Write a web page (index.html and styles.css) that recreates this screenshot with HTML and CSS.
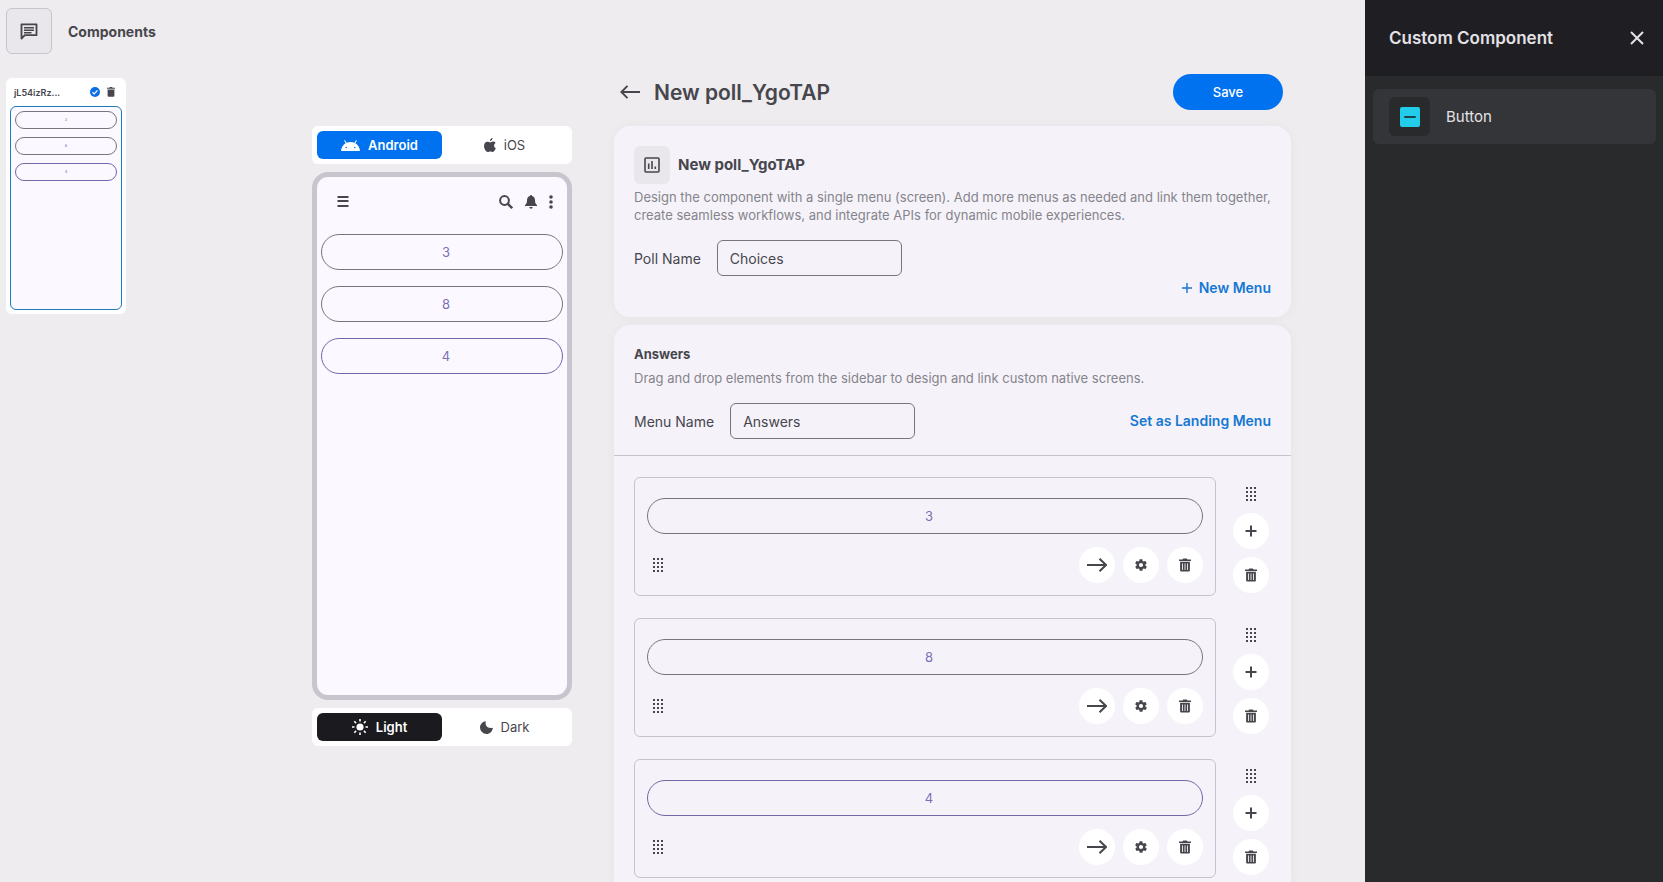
FILE: index.html
```html
<!DOCTYPE html>
<html lang="en">
<head>
    <meta charset="UTF-8">
    <meta name="viewport" content="width=device-width, initial-scale=1.0">
    <title>New poll_YgoTAP</title>
    <link rel="stylesheet" href="styles.css">
</head>
<body>
    <svg class="sprite" aria-hidden="true">
        <symbol id="i-trash" viewBox="0 0 14 16">
            <path d="M0 1.5h4l1-1.2h4l1 1.2h4v1.8H0zM1.3 4.3h11.4v10.2a1.2 1.2 0 0 1-1.2 1.2h-9a1.2 1.2 0 0 1-1.2-1.2z"/>
            <path d="M4.1 6.2v7.6M7 6.2v7.6M9.9 6.2v7.6" stroke="#fff" stroke-width="1"/>
        </symbol>
        <symbol id="i-grip" viewBox="0 0 10 14">
            <path d="M0 1h10M0 5h10M0 9h10M0 13h10" stroke="currentColor" stroke-width="2" stroke-dasharray="2 2"/>
        </symbol>
        <symbol id="i-plus" viewBox="0 0 12 12">
            <path d="M6 .5v11M.5 6h11" stroke="currentColor" stroke-width="2" fill="none"/>
        </symbol>
        <symbol id="i-gear" viewBox="0 0 24 24">
            <path d="M19.4 13c0-.3.1-.6.1-1s0-.7-.1-1l2.1-1.600c.2-.2.3-.4.100-.700l-2-3.400c-.1-.2-.4-.3-.6-.2l-2.500 1c-.5-.4-1.100-.7-1.700-1l-.4-2.600c0-.300-.2-.500-.5-.500h-4c-.2 0-.4.200-.5.500l-.4 2.600c-.6.300-1.200.6-1.700 1l-2.500-1c-.2-.1-.5 0-.6.200l-2 3.400c-.1.300-.1.500.1.700L4.600 11c0 .3-.1.600-.1 1s0 .7.1 1l-2.100 1.600c-.2.200-.2.400-.1.700l2 3.400c.1.200.4.300.6.200l2.500-1c.5.400 1.100.7 1.700 1l.4 2.600c0 .300.300.500.500.500h4c.3 0 .5-.2.5-.5l.4-2.600c.6-.3 1.200-.6 1.700-1l2.500 1c.2.100.5 0 .6-.2l2-3.400c.1-.3.100-.5-.1-.7zM12 15.600a3.600 3.600 0 1 1 0-7.200 3.600 3.600 0 0 1 0 7.200z"/>
        </symbol>
        <symbol id="i-arrow" viewBox="0 0 20 14">
            <path d="M0 7h19M12.500.7 19 7l-6.500 6.300" fill="none" stroke="currentColor" stroke-width="2"/>
        </symbol>
    </svg>

    <div class="layout">
        <div class="workspace">
            <header class="topbar">
                <button class="icon-tile" aria-label="Messages">
                    <svg width="20" height="20" viewBox="0 0 24 24"><path d="M3 4h18v13H7l-4 4V4z" fill="none" stroke="currentColor" stroke-width="2.200" stroke-linejoin="round"/><path d="M6 8h12M6 11h12M6 14h9" stroke="currentColor" stroke-width="1.800"/></svg>
                </button>
                <h2>Components</h2>
            </header>

            <div class="content">
                <div class="thumb">
                    <div class="thumb-head">
                        <span class="thumb-name">jL54izRz...</span>
                        <svg width="10" height="10" viewBox="0 0 10 10"><circle cx="5" cy="5" r="5" fill="#0b6fe4"/><path d="M2.500 5.200l1.700 1.700 3.300-3.500" fill="none" stroke="#fff" stroke-width="1.300"/></svg>
                        <button class="plain" aria-label="Delete component"><svg width="8" height="10" viewBox="0 0 8 10"><path d="M0 .8h2.300L3 .1h2l.7.700H8v1H0zM.6 2.400h6.800v6.400a1 1 0 0 1-1 1H1.600a1 1 0 0 1-1-1z"/></svg></button>
                    </div>
                    <div class="thumb-screen">
                        <div class="thumb-pill">3</div>
                        <div class="thumb-pill">8</div>
                        <div class="thumb-pill pill-alt">4</div>
                    </div>
                </div>

                <section class="preview">
                    <div class="switch">
                        <button class="switch-btn active-blue">
                            <svg width="19" height="11" viewBox="0 0 19 11"><path d="M0 11C.300 7 2.300 4.500 4.600 3.200L3.100.6l.8-.5 1.600 2.700c2.500-1 5.500-1 8 0L15.100.1l.8.5-1.500 2.600C16.700 4.500 18.700 7 19 11z" fill="currentColor"/><circle cx="5.200" cy="7.500" r=".8" fill="#0072ef"/><circle cx="13.800" cy="7.500" r=".8" fill="#0072ef"/></svg>
                            Android
                        </button>
                        <button class="switch-btn">
                            <svg width="12" height="14" viewBox="0 0 12 14"><path d="M8.600.1c.1 1.500-1.200 3-2.700 3C5.700 1.600 7.100.200 8.600.1zM11.800 10.200c-.7 1.800-1.800 3.700-3.100 3.700-.900 0-1.300-.5-2.400-.5s-1.500.5-2.400.5C2 14 0 10.700 0 7.900 0 5.200 1.700 3.700 3.400 3.700c1.100 0 2 .7 2.700.7.600 0 1.700-.8 3.100-.8.900 0 1.800.5 2.400 1.300-2.200 1.300-1.800 4.400.2 5.300z"/></svg>
                            iOS
                        </button>
                    </div>

                    <div class="phone">
                        <div class="phone-bar">
                            <svg class="menu-icon" width="12" height="12" viewBox="0 0 12 12"><path d="M.5 1h11M.5 5h11M.5 10h11" stroke="currentColor" stroke-width="2"/></svg>
                            <svg width="14" height="14" viewBox="0 0 14 14"><circle cx="5.500" cy="5.500" r="4.400" fill="none" stroke="currentColor" stroke-width="2"/><path d="M8.800 8.800l4.400 4.400" stroke="currentColor" stroke-width="2.400"/></svg>
                            <svg width="12" height="14" viewBox="0 0 12 14"><path d="M6 0c.6 0 1 .5 1 1.100C9 1.600 10 3.200 10 5.200c0 2.800.7 3.900 2 4.900v1H0v-1c1.300-1 2-2.100 2-4.900 0-2 1-3.600 3-4.100C5 .5 5.400 0 6 0zM4.300 12h3.400c0 2.300-3.400 2.300-3.400 0z"/></svg>
                            <svg width="4" height="14" viewBox="0 0 4 14"><circle cx="2" cy="2" r="1.800"/><circle cx="2" cy="7" r="1.800"/><circle cx="2" cy="12" r="1.800"/></svg>
                        </div>
                        <button class="pill">3</button>
                        <button class="pill">8</button>
                        <button class="pill pill-alt">4</button>
                    </div>

                    <div class="switch">
                        <button class="switch-btn active-dark">
                            <svg width="16" height="16" viewBox="0 0 16 16"><circle cx="8" cy="8" r="3.600" fill="currentColor"/><path d="M8 0v2.500M8 13.500V16M0 8h2.500M13.500 8H16M2.300 2.300l1.800 1.800M11.900 11.900l1.800 1.800M2.300 13.700l1.800-1.800M11.900 4.100l1.800-1.800" stroke="currentColor" stroke-width="1.600"/></svg>
                            Light
                        </button>
                        <button class="switch-btn">
                            <svg width="13" height="13" viewBox="0 0 13 13"><path d="M6 .2C4.400 3.800 7.400 8 12.900 6.700 12.500 10.500 9.800 13 6.500 13A6.500 6.500 0 0 1 0 6.500C0 3.200 2.500.4 6 .2z"/></svg>
                            Dark
                        </button>
                    </div>
                </section>

                <main class="editor">
                    <div class="editor-head">
                        <button class="plain" aria-label="Back"><svg width="20" height="14" viewBox="0 0 20 14"><path d="M20 7H1.500M7.500.9 1.400 7l6.100 6.100" fill="none" stroke="currentColor" stroke-width="2"/></svg></button>
                        <h1>New poll_YgoTAP</h1>
                        <button class="save-btn">Save</button>
                    </div>

                    <section class="card poll-card">
                        <div class="card-heading">
                            <span class="poll-icon"><svg width="16" height="16" viewBox="0 0 16 16"><rect x="1" y="1" width="14" height="14" rx="1" fill="none" stroke="currentColor" stroke-width="1.600"/><path d="M4.700 6.500V12M8 4v8M11.300 9.500V12" stroke="currentColor" stroke-width="1.600"/></svg></span>
                            <h3 class="poll-title">New poll_YgoTAP</h3>
                        </div>
                        <p class="hint">Design the component with a single menu (screen). Add more menus as needed and link them together, create seamless workflows, and integrate APIs for dynamic mobile experiences.</p>
                        <div class="field">
                            <label for="poll-name">Poll Name</label>
                            <input type="text" id="poll-name" value="Choices">
                        </div>
                        <button class="text-btn new-menu"><svg width="10" height="10" viewBox="0 0 10 10"><path d="M5 0v10M0 5h10" stroke="currentColor" stroke-width="1.400"/></svg>New Menu</button>
                    </section>

                    <section class="card">
                        <div class="menu-head">
                            <h3>Answers</h3>
                            <p class="hint">Drag and drop elements from the sidebar to design and link custom native screens.</p>
                            <div class="field">
                                <label for="menu-name">Menu Name</label>
                                <input type="text" id="menu-name" value="Answers">
                                <button class="text-btn">Set as Landing Menu</button>
                            </div>
                        </div>

                        <div class="elements">
                            <div class="element">
                                <div class="element-box">
                                    <button class="pill">3</button>
                                    <div class="element-tools">
                                        <svg class="grip" width="10" height="14"><use href="#i-grip"/></svg>
                                        <button class="round" aria-label="Link"><svg width="20" height="14"><use href="#i-arrow"/></svg></button>
                                        <button class="round" aria-label="Settings"><svg width="14" height="14"><use href="#i-gear"/></svg></button>
                                        <button class="round" aria-label="Delete"><svg width="12" height="14"><use href="#i-trash"/></svg></button>
                                    </div>
                                </div>
                                <div class="row-tools">
                                    <svg class="grip" width="10" height="14"><use href="#i-grip"/></svg>
                                    <button class="round" aria-label="Add"><svg width="12" height="12"><use href="#i-plus"/></svg></button>
                                    <button class="round" aria-label="Delete row"><svg width="12" height="14"><use href="#i-trash"/></svg></button>
                                </div>
                            </div>
                            <div class="element">
                                <div class="element-box">
                                    <button class="pill">8</button>
                                    <div class="element-tools">
                                        <svg class="grip" width="10" height="14"><use href="#i-grip"/></svg>
                                        <button class="round" aria-label="Link"><svg width="20" height="14"><use href="#i-arrow"/></svg></button>
                                        <button class="round" aria-label="Settings"><svg width="14" height="14"><use href="#i-gear"/></svg></button>
                                        <button class="round" aria-label="Delete"><svg width="12" height="14"><use href="#i-trash"/></svg></button>
                                    </div>
                                </div>
                                <div class="row-tools">
                                    <svg class="grip" width="10" height="14"><use href="#i-grip"/></svg>
                                    <button class="round" aria-label="Add"><svg width="12" height="12"><use href="#i-plus"/></svg></button>
                                    <button class="round" aria-label="Delete row"><svg width="12" height="14"><use href="#i-trash"/></svg></button>
                                </div>
                            </div>
                            <div class="element">
                                <div class="element-box">
                                    <button class="pill pill-alt">4</button>
                                    <div class="element-tools">
                                        <svg class="grip" width="10" height="14"><use href="#i-grip"/></svg>
                                        <button class="round" aria-label="Link"><svg width="20" height="14"><use href="#i-arrow"/></svg></button>
                                        <button class="round" aria-label="Settings"><svg width="14" height="14"><use href="#i-gear"/></svg></button>
                                        <button class="round" aria-label="Delete"><svg width="12" height="14"><use href="#i-trash"/></svg></button>
                                    </div>
                                </div>
                                <div class="row-tools">
                                    <svg class="grip" width="10" height="14"><use href="#i-grip"/></svg>
                                    <button class="round" aria-label="Add"><svg width="12" height="12"><use href="#i-plus"/></svg></button>
                                    <button class="round" aria-label="Delete row"><svg width="12" height="14"><use href="#i-trash"/></svg></button>
                                </div>
                            </div>
                        </div>
                    </section>
                </main>
            </div>
        </div>

        <aside class="sidebar">
            <div class="sidebar-head">
                <h2>Custom Component</h2>
                <button class="plain" aria-label="Close"><svg width="14" height="14" viewBox="0 0 14 14"><path d="M1 1l12 12M13 1L1 13" stroke="currentColor" stroke-width="2"/></svg></button>
            </div>
            <button class="component">
                <span class="component-icon"><svg width="20" height="20" viewBox="0 0 20 20"><rect width="20" height="20" rx="2" fill="#22cdea"/><path d="M5 10h10" stroke="#20434b" stroke-width="2" stroke-linecap="round"/></svg></span>
                Button
            </button>
        </aside>
    </div>
</body>
</html>
```
FILE: styles.css
```css
* {
    box-sizing: border-box;
}
body {
    margin: 0;
    font-family: Inter, sans-serif;
    font-size: 14px;
    color: #47464d;
    background-color: #eeecef;
}
h1, h2, h3, p {
    margin: 0;
}
button, input {
    font: inherit;
    color: inherit;
}
button {
    padding: 0;
    border: none;
    background: none;
    cursor: pointer;
}
svg {
    display: block;
    flex: none;
    fill: currentColor;
}
.sprite {
    position: absolute;
    width: 0;
    height: 0;
}
.layout {
    display: flex;
    height: 100vh;
    overflow: hidden;
}
.workspace {
    flex: 1;
    min-width: 0;
    overflow-y: auto;
    scrollbar-width: none;
    padding: 8px 74px 0 6px;
}

/* top bar */
.topbar {
    display: flex;
    align-items: center;
    gap: 16px;
}
.icon-tile {
    display: flex;
    align-items: center;
    justify-content: center;
    width: 46px;
    height: 46px;
    border: 1px solid #c6c5cd;
    border-radius: 6px;
    background-color: #e9e7eb;
}
.topbar h2 {
    font-size: 14px;
    font-weight: 700;
}
.content {
    display: flex;
    align-items: flex-start;
    padding-top: 20px;
}

/* thumbnail */
.thumb {
    width: 120px;
    margin-top: 4px;
    padding: 0 4px 4px;
    border-radius: 6px;
    background-color: #fff;
}
.thumb-head {
    display: flex;
    align-items: center;
    gap: 7px;
    height: 28px;
    padding: 0 7px 0 4px;
    font-size: 9px;
    font-weight: 600;
}
.thumb-name {
    flex: 1;
}
.thumb-screen {
    display: flex;
    flex-direction: column;
    gap: 8px;
    height: 204px;
    padding: 4px;
    border: 1px solid #1a7db5;
    border-radius: 6px;
    background-color: #fbf9ff;
}
.thumb-pill {
    height: 18px;
    border: 1px solid #77767d;
    border-radius: 9px;
    color: #7c6fb8;
    font-size: 4px;
    line-height: 16px;
    text-align: center;
}

/* device preview */
.preview {
    display: flex;
    flex-direction: column;
    gap: 8px;
    width: 260px;
    margin: 52px 42px 0 186px;
}
.switch {
    display: flex;
    padding: 5px;
    border-radius: 6px;
    background-color: #fff;
}
.switch-btn {
    display: flex;
    flex: 1;
    align-items: center;
    justify-content: center;
    gap: 8px;
    height: 28px;
    border-radius: 6px;
    font-size: 13px;
}
.active-blue {
    background-color: #0072ef;
    color: #fff;
    font-weight: 600;
}
.active-dark {
    background-color: #1b1b1f;
    color: #fff;
    font-weight: 600;
}
.phone {
    display: flex;
    flex-direction: column;
    gap: 16px;
    height: 528px;
    padding: 0 4px;
    border: 5px solid #c7c5ce;
    border-radius: 16px;
    background-color: #fbf9ff;
}
.phone-bar {
    display: flex;
    align-items: center;
    gap: 12px;
    height: 41px;
    padding: 8px 10px 0 16px;
}
.menu-icon {
    margin-right: auto;
}
.pill {
    width: 100%;
    height: 36px;
    padding-left: 8px;
    border: 1px solid #77767d;
    border-radius: 18px;
    color: #7c6fb8;
    font-size: 13px;
    text-align: center;
}
.pill-alt {
    border-color: #7268a6;
}

/* editor */
.editor {
    flex: 1;
    min-width: 0;
}
.editor-head {
    display: flex;
    align-items: center;
    gap: 14px;
    height: 36px;
    margin-bottom: 16px;
    padding: 0 8px 0 6px;
}
.editor-head h1 {
    flex: 1;
    font-size: 21px;
    font-weight: 600;
}
.save-btn {
    width: 110px;
    height: 36px;
    border-radius: 18px;
    background-color: #0072ef;
    color: #fff;
    font-size: 13px;
    font-weight: 500;
}
.card {
    margin-bottom: 8px;
    border-radius: 16px;
    background-color: #f5f3f9;
    box-shadow: 0 0 12px rgba(40, 40, 60, 0.04);
}
.card h3 {
    font-size: 13px;
    font-weight: 700;
    line-height: 18px;
}
.poll-card {
    display: flex;
    flex-direction: column;
    padding: 20px 20px 19px;
}
.card-heading {
    display: flex;
    align-items: center;
    gap: 8px;
    margin-bottom: 4px;
}
.poll-icon {
    display: flex;
    align-items: center;
    justify-content: center;
    width: 36px;
    height: 38px;
    border-radius: 6px;
    background-color: #e9e7ec;
}
.card .poll-title {
    font-size: 15px;
}
.hint {
    margin-right: -8px;
    color: #85848c;
    font-size: 13px;
    line-height: 18px;
}
.field {
    display: flex;
    align-items: center;
    gap: 16px;
    margin-top: 16px;
}
.field input {
    width: 185px;
    height: 36px;
    padding: 0 12px;
    border: 1px solid #77767d;
    border-radius: 6px;
    background: none;
}
.text-btn {
    display: flex;
    align-items: center;
    gap: 7px;
    margin-left: auto;
    color: #1678d3;
    font-weight: 600;
    line-height: 20px;
}
.new-menu {
    margin-top: 2px;
}
.menu-head {
    padding: 20px 20px 16px;
    border-bottom: 1px solid #c6c5cd;
}
.menu-head .hint {
    margin-top: 6px;
}
.elements {
    display: flex;
    flex-direction: column;
    gap: 22px;
    padding: 21px 22px 21px 20px;
}
.element {
    display: flex;
    gap: 17px;
}
.element-box {
    flex: 1;
    height: 119px;
    padding: 20px 12px 12px;
    border: 1px solid #c6c5cd;
    border-radius: 6px;
}
.element-tools {
    display: flex;
    align-items: center;
    gap: 8px;
    margin-top: 13px;
}
.element-tools .grip {
    margin: 0 auto 0 6px;
}
.row-tools {
    display: flex;
    flex-direction: column;
    align-items: center;
    gap: 8px;
    padding-top: 10px;
}
.row-tools .grip {
    margin-bottom: 4px;
}
.round {
    display: flex;
    align-items: center;
    justify-content: center;
    width: 36px;
    height: 36px;
    border-radius: 50%;
    background-color: #fff;
}

/* right sidebar */
.sidebar {
    flex: none;
    width: 298px;
    background-color: #282a2b;
    color: #e4e2e6;
}
.sidebar-head {
    display: flex;
    align-items: center;
    justify-content: space-between;
    height: 76px;
    padding: 0 19px 0 24px;
    background-color: #1f1f23;
}
.sidebar-head h2 {
    font-size: 17px;
    font-weight: 600;
}
.component {
    display: flex;
    align-items: center;
    gap: 16px;
    width: calc(100% - 15px);
    height: 55px;
    margin: 13px 7px 0 8px;
    padding: 0 16px;
    border-radius: 6px;
    background-color: #343539;
    font-size: 15px;
}
.component-icon {
    display: flex;
    align-items: center;
    justify-content: center;
    width: 41px;
    height: 39px;
    border-radius: 6px;
    background-color: #282a2b;
}
```
